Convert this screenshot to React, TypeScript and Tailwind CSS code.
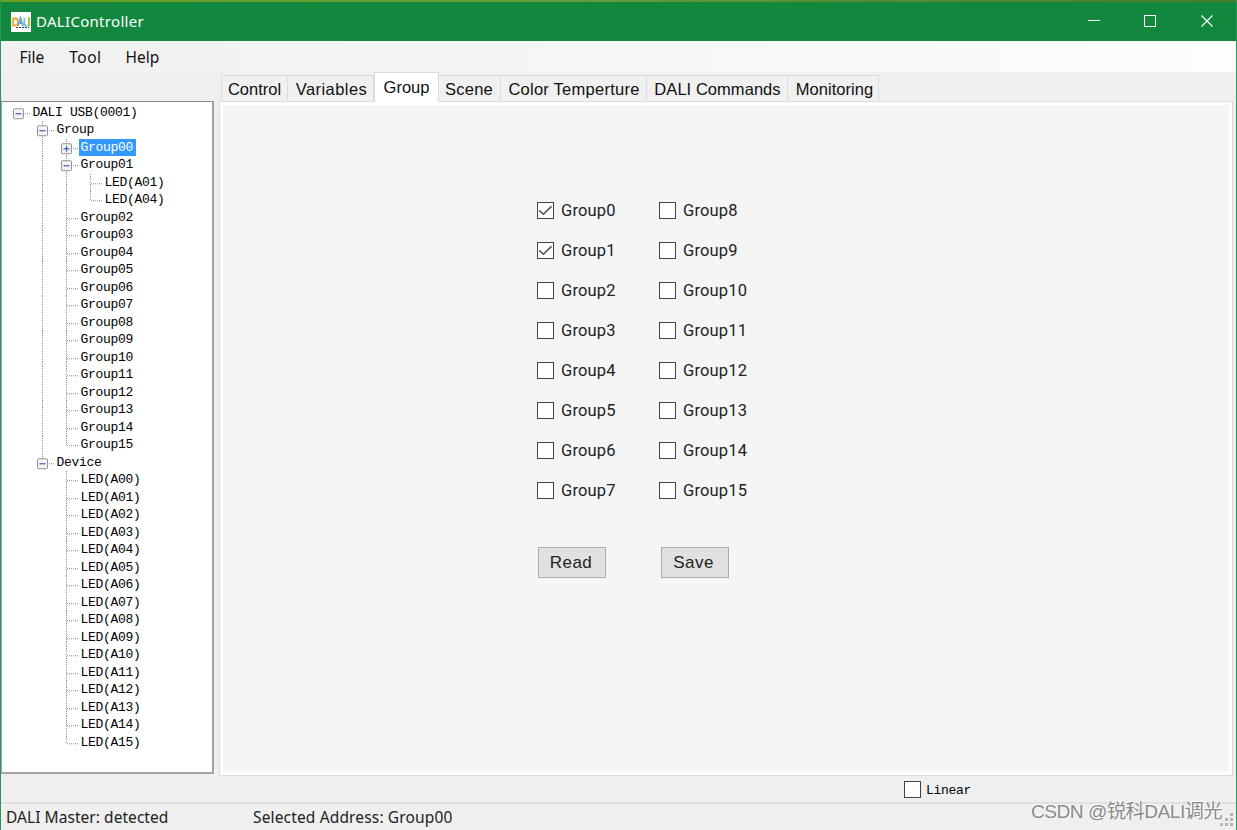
import React, { useState } from "react";

type Item = { label: string; depth: number; icon?: "plus" | "minus"; last?: boolean; guides: boolean[] };

const pad = (n: number) => String(n).padStart(2, "0");

const items: Item[] = [
  { label: "DALI USB(0001)", depth: 0, icon: "minus", last: true, guides: [] },
  { label: "Group", depth: 1, icon: "minus", guides: [false] },
  { label: "Group00", depth: 2, icon: "plus", guides: [false, true] },
  { label: "Group01", depth: 2, icon: "minus", guides: [false, true] },
  { label: "LED(A01)", depth: 3, guides: [false, true, true] },
  { label: "LED(A04)", depth: 3, last: true, guides: [false, true, true] },
  ...Array.from({ length: 14 }, (_, i) => ({
    label: `Group${pad(i + 2)}`,
    depth: 2,
    last: i === 13,
    guides: [false, true],
  })),
  { label: "Device", depth: 1, icon: "minus" as const, last: true, guides: [false] },
  ...Array.from({ length: 16 }, (_, i) => ({
    label: `LED(A${pad(i)})`,
    depth: 2,
    last: i === 15,
    guides: [false, false],
  })),
];

const tabs = [
  { label: "Control", cell: "w-[67px]", text: "" },
  { label: "Variables", cell: "w-[86px]", text: "tracking-[0.45px] pl-[2px]" },
  { label: "Group", cell: "w-[65px]", text: "" },
  { label: "Scene", cell: "w-[62px]", text: "tracking-[0.2px] pr-px" },
  { label: "Color Temperture", cell: "w-[146px]", text: "tracking-[0.25px] pl-px" },
  { label: "DALI Commands", cell: "w-[141px]", text: "tracking-[0.05px] pl-px" },
  { label: "Monitoring", cell: "w-[91px]", text: "tracking-[0.05px] pl-[3px]" },
];

function Guide({ on }: { on: boolean }) {
  return (
    <svg className="h-[17.5px] w-6 shrink-0" viewBox="0 0 24 17.5">
      {on && <path d="M7.5 0V17.5" stroke="#8b8b8b" strokeDasharray="1 1" />}
    </svg>
  );
}

function Branch({ item }: { item: Item }) {
  const root = item.depth === 0;
  return (
    <svg className="h-[17.5px] w-5 shrink-0" viewBox="0 0 20 17.5" fill="none">
      {!root && <path d={item.last ? "M7.5 0V10" : "M7.5 0V17.5"} stroke="#8b8b8b" strokeDasharray="1 1" />}
      <path d="M8 9.75H19" stroke="#8b8b8b" strokeDasharray="1 1" />
      {item.icon && (
        <>
          <rect x="2.5" y="4.75" width="10" height="10" rx="1" fill="#f3f3f3" stroke="#929292" />
          <path d="M4.5 9.75H10.5" stroke="#3f5fb5" strokeWidth="1.2" />
          {item.icon === "plus" && <path d="M7.5 6.75V12.75" stroke="#3f5fb5" strokeWidth="1.2" />}
        </>
      )}
    </svg>
  );
}

function Box({ checked }: { checked?: boolean }) {
  return (
    <span className="flex size-[17px] shrink-0 items-center justify-center border border-[#444] bg-white">
      {checked && (
        <svg viewBox="0 0 15 15" className="size-[15px]" fill="none" stroke="#505050" strokeWidth="1.5">
          <path d="M1.3 7.4L5.4 11.3L13.5 3.4" />
        </svg>
      )}
    </span>
  );
}

export default function App() {
  const [checked, setChecked] = useState<number[]>([0, 1]);
  const toggle = (n: number) => setChecked((c) => (c.includes(n) ? c.filter((x) => x !== n) : [...c, n]));

  return (
    <div className="flex h-[830px] w-[1237px] flex-col overflow-hidden border-x border-[#24975a] bg-[#efefef] font-['Liberation_Sans',sans-serif] text-[#111]">
      <div className="h-[2px] shrink-0 bg-linear-to-r from-[#6f9e18] via-[#5f9a3c] to-[#4b7a22]" />
      <header className="flex h-[39px] shrink-0 items-center bg-[#12883e] pl-[10px] text-white">
        <svg className="size-5" viewBox="0 0 20 20">
          <rect width="20" height="20" fill="#fff" />
          <g fill="none" strokeWidth="1.8">
            <path d="M2 6.5V13.5H4C8 13.5 8 6.5 4 6.5H1.5" stroke="#f5a623" />
            <path d="M7 14L9.5 6L12 14M8 11H11.5" stroke="#6aa5dc" />
            <path d="M13.3 6V13.5H16.5" stroke="#7fc6c0" />
            <path d="M18 5V14.5" stroke="#a4bf24" />
          </g>
          <path d="M5 15.5H18" stroke="#333" strokeDasharray="2 1" />
        </svg>
        <span className="ml-[5px] font-['Noto_Sans',sans-serif] text-[15px] tracking-[0.3px]">DALIController</span>
        <svg className="ml-auto h-[39px] w-[169px]" viewBox="0 0 169 39" fill="none" stroke="#fff">
          <path d="M21 18.5H33" />
          <rect x="77.5" y="13.5" width="11" height="11" />
          <path d="M134.5 13.5L145.5 24.5M145.5 13.5L134.5 24.5" strokeWidth="1.2" />
        </svg>
      </header>
      <nav className="flex h-[31px] shrink-0 items-center gap-[25px] bg-linear-to-r from-[#f0f0f0] to-[#fdfdfd] pt-[2px] pl-[18.5px] font-['Noto_Sans',sans-serif] text-[15.5px]">
        <span>File</span>
        <span className="tracking-[0.5px]">Tool</span>
        <span className="-ml-[1px]">Help</span>
      </nav>

      <div className="flex h-[704px] shrink-0">
        <aside className="mt-[29px] h-[673px] w-[213px] shrink-0 border-2 border-t-1 border-l-1 border-[#a1a4ad] border-t-[#858991] bg-white pt-[1.5px] pl-[9px] font-['Liberation_Mono',monospace] text-[13px] tracking-[-0.3px] text-black">
          {items.map((item, i) => (
            <div key={i} className="flex h-[17.5px] items-center">
              {item.guides.map((on, g) => (
                <Guide key={g} on={on} />
              ))}
              <Branch item={item} />
              <span
                className={
                  i === 2
                    ? "h-[17px] bg-[#3399ff] pr-[3px] pl-[1.5px] leading-[18px] whitespace-pre text-white"
                    : "h-[17px] pl-[1.5px] leading-[18px] whitespace-pre"
                }
              >
                {item.label}
              </span>
            </div>
          ))}
        </aside>

        <section className="ml-[5px] flex w-[1014px] flex-col">
          <div className="flex h-[30px] shrink-0 items-end pl-[2px] text-[16.5px]">
            {tabs.map((t, i) => (
              <div
                key={t.label}
                className={`${t.cell} flex shrink-0 justify-center whitespace-nowrap ${
                  i === 2
                    ? "z-10 h-[30px] items-center border border-b-0 border-[#dcdcdc] bg-white pb-px"
                    : "h-[27px] items-center border-t border-r border-[#dcdcdc] bg-[#f0f0f0]" + (i === 0 ? " border-l" : "")
                }`}
              >
                <span className={t.text}>{t.label}</span>
              </div>
            ))}
          </div>
          <main className="-mt-px h-[675px] shrink-0 border border-[#dcdcdc] bg-white p-[3px]">
            <div className="flex h-full flex-col bg-[#f5f5f5] pt-[85px] pl-[314px]">
              <div className="grid w-[260px] grid-flow-col grid-cols-[122px_122px] grid-rows-8 font-['Roboto',sans-serif] text-[16.5px]">
                {Array.from({ length: 16 }, (_, n) => (
                  <button key={n} onClick={() => toggle(n)} className="flex h-10 items-center gap-[7px] text-left">
                    <Box checked={checked.includes(n)} />
                    <span className="pt-[2px] tracking-[0.15px] text-[#222]">Group{n}</span>
                  </button>
                ))}
              </div>
              <div className="mt-[37px] ml-px flex gap-[55px] text-[17px] tracking-[0.5px] text-[#222]">
                <button className="h-[31px] w-[68px] border border-[#adadad] bg-[#e1e1e1] pr-[2px]">Read</button>
                <button className="h-[31px] w-[68px] border border-[#adadad] bg-[#e1e1e1] pr-[3px]">Save</button>
              </div>
            </div>
          </main>
        </section>
      </div>

      <div className="flex h-[26px] shrink-0 items-center gap-[5px] pl-[903px] font-['Liberation_Mono',monospace] text-[13px] tracking-[-0.3px] text-black">
        <Box />
        <span className="pt-[3px]">Linear</span>
      </div>
      <footer className="relative flex h-[28px] shrink-0 items-center border-t-2 border-[#e0e0e0] pl-[5px] font-['Noto_Sans',sans-serif] text-[15.5px] text-[#222]">
        <span className="w-[247px] pt-[2px] tracking-[0.05px]">DALI Master: detected</span>
        <span className="pt-[2px] tracking-[0.15px]">Selected Address: Group00</span>
        <svg className="ml-auto h-[26px] w-[18px]" viewBox="0 0 18 26" fill="#b4b4b4">
          <path d="M12 9h3v3h-3zM7 14h3v3H7zM12 14h3v3h-3zM2 19h3v3H2zM7 19h3v3H7zM12 19h3v3h-3z" />
        </svg>
        <span className="absolute top-[-5px] right-[14px] font-['Liberation_Sans','Noto_Sans_CJK_SC',sans-serif] text-[19px] leading-[26px] tracking-[-0.4px] whitespace-nowrap text-[#8a8a8a] [text-shadow:-1px_-1px_0_#fff]">
          CSDN @锐科DALI调光
        </span>
      </footer>
    </div>
  );
}
